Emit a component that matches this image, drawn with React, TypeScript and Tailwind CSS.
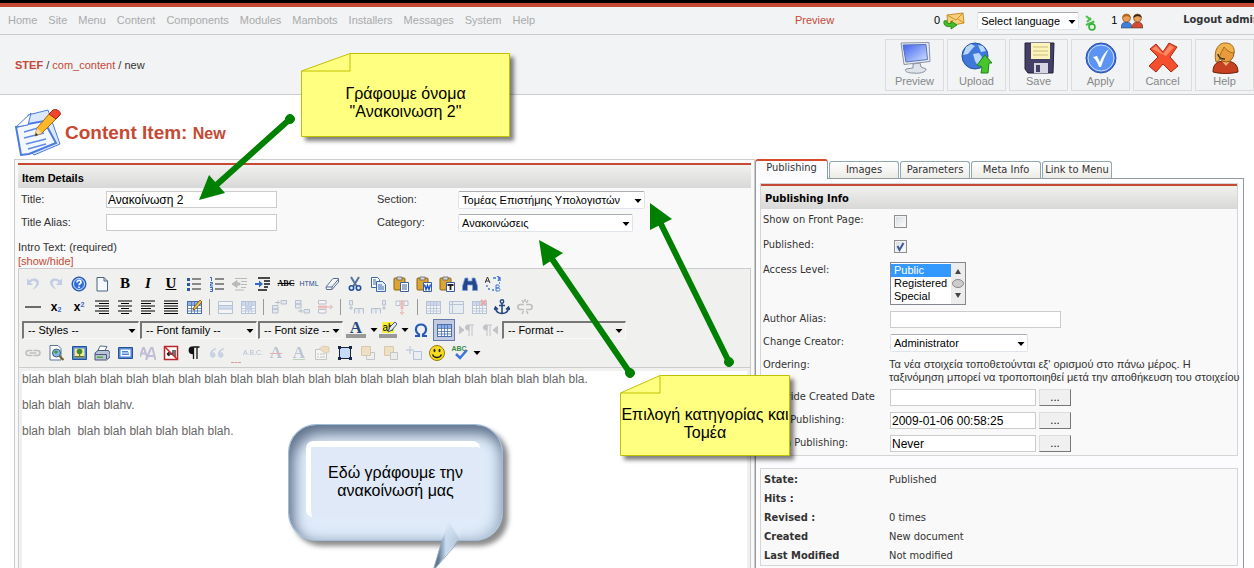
import { useState } from "react";
import type { ReactNode } from "react";

const menuItems = ["Home", "Site", "Menu", "Content", "Components", "Modules", "Mambots", "Installers", "Messages", "System", "Help"];
const tabs = ["Publishing", "Images", "Parameters", "Meta Info", "Link to Menu"];

const blah = `${"blah ".repeat(21)}bla.

blah blah  blah blahv.

blah blah  blah blah blah blah blah blah.`;

const info = [
  ["State:", "Published"],
  ["Hits :", ""],
  ["Revised :", "0 times"],
  ["Created", "New document"],
  ["Last Modified", "Not modified"],
];

/* ---------- 16px editor icons ---------- */

const grid = (
  <>
    <rect x="1.5" y="2.5" width="14" height="12" fill="#fff" stroke="#4a6fb0" />
    <path d="M2 3h13v3H2z" fill="#8fb0e6" />
    <path d="M1.500 6.500h14M1.500 9.500h14M1.500 12h14M5.500 3v11M8.500 3v11M11.500 3v11" stroke="#4a6fb0" strokeWidth=".8" />
  </>
);

const clipboard = (
  <>
    <rect x="1" y="2" width="11" height="12" rx="1" fill="#dba535" stroke="#8a6417" />
    <path d="M4 1h5v3H4z" fill="#d8d8d8" stroke="#666" strokeWidth=".8" />
    <path d="M7.500 6.500h8v9h-8z" fill="#fff" stroke="#3b5f9d" />
  </>
);

const art: Record<string, ReactNode> = {
  undo: <path d="M2 2v7h6L5.500 6.500C8 3 13 5 11 9c-.7 1.600-2 3-4 4.500 4-.8 7-4 7-7C14 2 7 1 4 4.500z" fill="#6f8fd0" />,
  redo: <path d="M14 2v7H8l2.500-2.500C8 3 3 5 5 9c.7 1.600 2 3 4 4.500-4-.8-7-4-7-7C2 2 9 1 12 4.500z" fill="#6f8fd0" />,
  help: (
    <>
      <circle cx="8" cy="8" r="7" fill="#2f6fd8" stroke="#1d4fa5" />
      <circle cx="8" cy="8" r="5.500" fill="none" stroke="#d6e6ff" />
      <path d="M6 6.500c0-3 4.500-2.800 4 0-.2 1-2 1.200-2 2.800M8 10.500v1.600" fill="none" stroke="#fff" strokeWidth="1.600" />
    </>
  ),
  page: <path d="M3 1.500h7l3.500 3.500v10H3zM10 1.500V5h3.500" fill="#f5f9ff" stroke="#4a6385" />,
  bullist: (
    <>
      <path d="M6 3h9M6 8h9M6 13h9" stroke="#222" strokeWidth="1.200" />
      <path d="M1 2h3v3H1zM1 7h3v3H1zM1 12h3v3H1z" fill="#2c56a8" />
    </>
  ),
  numlist: (
    <>
      <path d="M6 3h9M6 8h9M6 13h9" stroke="#222" strokeWidth="1.200" />
      <path d="M1 1.500h1.500V5M1 6.500h2.500v1.500H1.500V10h2.500M1 11.500h2.500v4H1M1.500 13.500h2" fill="none" stroke="#3569c4" />
    </>
  ),
  outdent: <path d="M3 2.500h12M9 5.500h6M9 8.500h6M9 11.500h5M3 14h9M0 8l5-3.500V7h3v2H5v2.500z" fill="#555" stroke="#555" />,
  indent: (
    <>
      <path d="M3 2h12M9 5h6M9 8h6M9 11h4M3 14h9" stroke="#111" strokeWidth="1.500" />
      <path d="M8 8 4 4.500V7H0v2h4v2.500z" fill="#3569c4" />
    </>
  ),
  eraser: <path d="M2 11 9 2.500h5.500v3.500L8 13.500H2.500zM2 11h6l6.500-8M8 11v2.500" fill="#fff" stroke="#5a6f94" />,
  cut: (
    <>
      <path d="m4 1 5.500 9M12 1 6.500 10" stroke="#52749e" strokeWidth="2" />
      <circle cx="4.500" cy="12" r="2.200" fill="none" stroke="#1f4e9c" strokeWidth="1.600" />
      <circle cx="11.500" cy="12" r="2.200" fill="none" stroke="#1f4e9c" strokeWidth="1.600" />
    </>
  ),
  copy: (
    <>
      <path d="M1.500 1.500h6l2 2v8h-8z" fill="#fff" stroke="#3e66a8" />
      <path d="M6.500 5.500h6l3 3v7h-9zM8 9h4M8 11h6M8 13h6M3 4h3M3 6h3M3 8h3" fill="#e6effc" stroke="#3e66a8" />
    </>
  ),
  paste: <>{clipboard}<path d="M9 9h5M9 11h5M9 13h5" stroke="#3b5f9d" /></>,
  pasteword: <>{clipboard}<path d="m8.500 8.500 1.500 5 1.500-4 1.500 4 1.500-5" fill="none" stroke="#1b57c4" strokeWidth="1.500" /></>,
  pastetext: <>{clipboard}<path d="M8.500 9h6M11.500 9v5" stroke="#222" strokeWidth="1.800" /></>,
  search: <path d="M3 2h3v3h4V2h3l2.500 8v4.500h-5V9H5.500v5.500h-5V10z" fill="#25478c" stroke="#7fa1dc" strokeWidth=".8" />,
  replace: (
    <>
      <path d="m0 7 2.500-6L5 7M1 5h3" fill="none" stroke="#333" />
      <path d="M11 9v6h2.500c2 0 2-2.700 0-3H11h2c1.800-.3 1.800-3 0-3z" fill="none" stroke="#3f74d6" />
      <path d="M8 2h3M13 2h2v3M14 7h1M2 9v2M3 13h2M7 14h2M12 0l3 2-2 3" fill="none" stroke="#3f74d6" strokeWidth="1.300" />
    </>
  ),
  hr: <path d="M0 8h16" stroke="#111" strokeWidth="1.200" />,
  right: <path d="M1 2h14M5 4.500h10M1 7h14M5 9.500h10M1 12h14M5 14.500h10" stroke="#000" strokeWidth="1.200" />,
  center: <path d="M1 2h14M4 4.500h8M1 7h14M4 9.500h8M1 12h14M4 14.500h8" stroke="#000" strokeWidth="1.200" />,
  left: <path d="M1 2h14M1 4.500h10M1 7h14M1 9.500h10M1 12h14M1 14.500h10" stroke="#000" strokeWidth="1.200" />,
  justify: <path d="M1 2h14M1 4.500h14M1 7h14M1 9.500h14M1 12h14M1 14.500h14" stroke="#000" strokeWidth="1.200" />,
  edittable: <>{grid}<path d="m7 11 1-3 6-7 2 2-6.500 7z" fill="#f0c34c" stroke="#6d4b16" strokeWidth=".8" /></>,
  table: grid,
  rowprops: <><path d="M1.500 2.500h14v12h-14z" fill="#fff" stroke="#4a6fb0" /><path d="M1.500 6.500h14v3.500h-14z" fill="#9dbbe8" stroke="#4a6fb0" /></>,
  cellprops: <>{grid}<path d="M5.500 6h6v5h-6z" fill="#6f98de" /></>,
  rowbefore: <path d="M10 1.500h5.500V5H10zM1.500 6.500H7V10H1.500zM1.500 10H7v4H1.500zM4 3.500h5M7 1.500v4" fill="#cdddf5" stroke="#50698f" />,
  rowafter: <path d="M1.500 1.500H7V5H1.500zM1.500 5H7v4H1.500zM10 10.500h5.500V14H10zM4 12h5M7 10v4" fill="#cdddf5" stroke="#50698f" />,
  delrow: <><path d="M1.500 1.500H9V5H1.500zM1.500 10.500H9V14H1.500z" fill="#fff" stroke="#50698f" /><path d="M1 6.500h9v3H1z" fill="#e06060" /><path d="M10 8h5m-2-2 2.500 2-2.500 2" stroke="#c44" fill="none" /></>,
  colbefore: <path d="M1.500 1.500h3V6h-3zM6.500 14.500V9.500H11v5M11 9.500h4.500v5M3 7v4M1 9h4" fill="#cdddf5" stroke="#50698f" />,
  colafter: <path d="M11.500 1.500h3V6h-3zM.5 14.500V9.500H5v5M5 9.500h4.500v5M13 7v4M11 9h4" fill="#cdddf5" stroke="#50698f" />,
  delcol: <><path d="M2 2h4v4.500H2zM10 2h4v4.500h-4z" fill="#fff" stroke="#50698f" /><path d="M6.500 1h3v9h-3z" fill="#e06060" /><path d="M8 10v5m-2-2 2 2.500 2-2.500" stroke="#c44" fill="none" /></>,
  merge: <><path d="M1.500 2.500h14v12h-14z" fill="#dce8fa" stroke="#4a6fb0" /><path d="M1.500 5.500h14M4.500 3v11" stroke="#4a6fb0" /></>,
  deltable: <>{grid}<path d="m10 1 5 5M15 1l-5 5" stroke="#d22" strokeWidth="2" /></>,
  anchor: (
    <>
      <circle cx="8" cy="2.500" r="1.700" fill="none" stroke="#27467f" strokeWidth="1.400" />
      <path d="M8 4v11M5 6.500h6M1.500 9c.5 4 3 5.500 6.500 5.500s6-1.500 6.500-5.500M0 11l1.500-3L4 10.500M16 11l-1.500-3L12 10.500" fill="none" stroke="#27467f" strokeWidth="1.600" />
    </>
  ),
  unlink: <path d="M7 5.500H3.500c-3.500 0-3.500 5 0 5H7M9 5.500h3.500c3.500 0 3.500 5 0 5H9M5 1l1.500 3M11 1 9.500 4M8 0v3M5 15l1.500-3M11 15l-1.500-3" fill="none" stroke="#666" strokeWidth="1.600" />,
  link: <path d="M7.500 5.500H4c-4 0-4 5 0 5h3.500M8.500 5.500H12c4 0 4 5 0 5H8.500M4.500 8h7" fill="none" stroke="#666" strokeWidth="1.600" />,
  omega: <path d="M2 14h4v-1.500C1 9 2.500 2.500 8 2.500S15 9 10 12.500V14h4" fill="none" stroke="#2659bd" strokeWidth="2.200" />,
  ltr: <path d="M0 4v8l5-4zM10 14V3M13 14V3M15 3H9C5.500 3 5.500 8 9 8h1V3" fill="#6b6f80" stroke="#6b6f80" />,
  rtl: <path d="M16 4v8l-5-4zM5 14V3M8 14V3M10 3H4C.5 3 .5 8 4 8h1V3" fill="#6b6f80" stroke="#6b6f80" />,
  preview: (
    <>
      <path d="M2 .5h8l3 3V15H2z" fill="#fff" stroke="#5b7597" />
      <circle cx="8.500" cy="8" r="4" fill="#88b8dd" stroke="#3b607f" />
      <path d="M6 7c1-2 3-2 4 0l-2 2z" fill="#3f9a4a" />
      <path d="m11.500 11 4 4" stroke="#7a6030" strokeWidth="2.200" />
    </>
  ),
  image: <><path d="M1.500 1.500h14v13h-14z" fill="#4f86d8" stroke="#24519a" /><path d="M3.500 3.500h10v9h-10z" fill="#f4e89a" /><circle cx="8.500" cy="6.500" r="2.800" fill="#3d8b34" /><path d="M3.500 11h10v1.500h-10zM8 8h1.200v3.500H8z" fill="#5b7a2c" /></>,
  print: <><path d="m6 1 7 .5-2.500 5H3.500z" fill="#fff" stroke="#5b6d8a" /><path d="M1 8l3-2.500h10.500L16 8v4l-3.500 3H1z" fill="#b8c4d6" stroke="#48597a" /><path d="M1 9.500h11.500V14" fill="none" stroke="#48597a" /><path d="M3 11.500h6v1.500H3z" fill="#4caf3c" /></>,
  fullscreen: <><path d="M1.500 2.500h14v11h-14z" fill="#4f86d8" stroke="#24519a" /><path d="M3.500 4.500h10v7h-10z" fill="#fff" /><path d="M5 6.500h6M5 8h7M5 9.500h7" stroke="#4f86d8" /></>,
  styleprops: <path d="m0 12 3-9h1l3 9M1.500 8.500h4M6 15l5-12h1.500l3 12M8 11h6.500" fill="none" stroke="#6c5fae" strokeWidth="2" />,
  cleanup: <><path d="M1.500 1.500h13v13h-13z" fill="#fff" stroke="#b3282c" strokeWidth="1.500" /><path d="M4 9h6V5M4 9l2.500-2M4 9l2.500 2M12 5v7" fill="none" stroke="#222" strokeWidth="1.300" /><path d="m2 2 12 12" stroke="#d22" strokeWidth="1.500" /></>,
  pilcrow: <path d="M7.500 14V2M11 14V2M13.500 2H7C2 2 2 8.500 7 8.500h.5V2z" fill="#111" stroke="#111" strokeWidth="1.300" />,
  quote: <path d="M7 3C2 4.500 1 7 1 10c0 3.500 5.500 3.500 5.500 0 0-2-1.500-3-3-2.500.3-1.500 1.500-2.500 3.500-3zM15 3c-5 1.500-6 4-6 7 0 3.500 5.500 3.500 5.500 0 0-2-1.500-3-3-2.500.3-1.500 1.500-2.500 3.500-3z" fill="#7f9bd0" />,
  attribs: <><path d="M1.500 4.500h11v10h-11z" fill="#fff" stroke="#777" /><path d="M3 9h2M6 9h5M3 12h2M6 12h5" stroke="#777" /><path d="m5 4 4-3 6 1v5l-4 1z" fill="#e8b96c" stroke="#a9793d" strokeWidth=".8" /></>,
  layer: <><path d="M2.500 2.500h11v11h-11z" fill="#c6dcfa" stroke="#223" /><path d="M1 1h3v3H1zM12 1h3v3h-3zM1 12h3v3H1zM12 12h3v3h-3z" fill="#152a4d" /></>,
  forward: <><path d="M6.500 7.500h8v7h-8z" fill="#e8eefa" stroke="#777" /><path d="M1.500 1.500h9v9h-9z" fill="#ecc56d" stroke="#a98035" /></>,
  backward: <><path d="M1.500 1.500h9v9h-9z" fill="#ecc56d" stroke="#a98035" /><path d="M7.500 7.500h7v7h-7z" fill="#dfe6f2" stroke="#777" /></>,
  abslayer: <path d="M7.500 6.500h8v8h-8zM4 1v8M0 5h8" fill="#e3ebf9" stroke="#4a6fb0" />,
  smiley: <><circle cx="8" cy="8" r="7.500" fill="#f6dc1c" stroke="#9a7a08" /><ellipse cx="5.500" cy="5.500" rx="1" ry="1.800" fill="#222" /><ellipse cx="10.500" cy="5.500" rx="1" ry="1.800" fill="#222" /><path d="M3.500 9.500c1.500 4 7.500 4 9 0" fill="none" stroke="#222" strokeWidth="1.300" /></>,
};

const rowOne = ["undo", "redo", "help", "page", "B", "I", "U", "bullist", "numlist", "outdent", "indent", "ABC", "HTML", "eraser", "cut", "copy", "paste", "pasteword", "pastetext", "search", "replace"];
const rowTwo = ["hr", "sub", "sup", "right", "center", "left", "justify", "edittable", "|", "rowprops", "cellprops", "|", "rowbefore", "rowafter", "delrow", "|", "colbefore", "colafter", "delcol", "|", "table:off", "merge", "deltable", "anchor", "unlink"];
const rowFour = ["link", "preview", "image", "print", "fullscreen", "styleprops", "cleanup", "pilcrow", "quote", "acronym", "A.B.C.", "del", "ins", "attribs", "layer", "forward", "backward", "abslayer", "smiley", "spell"];
const disabled = ["undo", "redo", "outdent", "rowprops", "cellprops", "rowbefore", "rowafter", "delrow", "colbefore", "colafter", "delcol", "table:off", "merge", "deltable", "unlink", "link", "styleprops", "quote", "acronym", "A.B.C.", "del", "ins", "attribs", "forward", "backward", "abslayer", "ltr", "rtl"];

const glyphs: Record<string, ReactNode> = {
  B: <b className="font-['Liberation_Serif',serif] text-[15px]">B</b>,
  I: <b className="font-['Liberation_Serif',serif] text-[15px] italic">I</b>,
  U: <b className="font-['Liberation_Serif',serif] text-[15px] underline">U</b>,
  ABC: <span className="font-['Liberation_Serif',serif] text-[8px] font-bold line-through">ABC</span>,
  HTML: <span className="text-[7px] text-[#1f4a94]">HTML</span>,
  sub: <b className="text-[12px]">x<sub className="text-[7px] text-[#3569c4]">2</sub></b>,
  sup: <b className="text-[12px]">x<sup className="text-[7px] text-[#3569c4]">2</sup></b>,
  "A.B.C.": <span className="text-[7px] text-[#3c5fa0]">A.B.C.</span>,
  del: <b className="font-['Liberation_Serif',serif] text-[17px] text-[#5c76a8] line-through decoration-[#e03030] decoration-1">A</b>,
  ins: <b className="font-['Liberation_Serif',serif] text-[17px] text-[#5c76a8] underline decoration-[#5aa050] decoration-1">A</b>,
};

const Tool = ({ name }: { name: string }) => {
  if (name === "|") return <span className="mr-1 ml-[3px] h-4 w-px bg-[#999]" />;
  if (name === "acronym")
    return (
      <button aria-label="Acronym" className="flex h-5 w-[13px] items-end justify-center">
        <span className="w-[10px] border-b border-dashed border-[#dca0a0]" />
      </button>
    );
  if (name === "spell")
    return (
      <button aria-label="Spellcheck" className="flex h-5 w-8 items-center gap-1">
        <span className="relative h-4 w-[22px] text-center text-[7px] leading-[7px] font-bold text-[#3c8a4a]">
          ABC
          <svg viewBox="0 0 16 10" className="absolute top-[5px] left-1 h-[10px] w-4"><path d="m3 4 4 4 7-8" fill="none" stroke="#3f74d6" strokeWidth="2.500" /></svg>
        </span>
        <Arrow />
      </button>
    );
  const key = name.split(":")[0];
  return (
    <button aria-label={key} className={`mr-px flex h-5 w-[22px] shrink-0 items-center justify-center leading-none text-black ${disabled.includes(name) ? "opacity-35" : ""}`}>
      {glyphs[key] ?? <svg viewBox="0 0 16 16" className="size-4">{art[key]}</svg>}
    </button>
  );
};

const Arrow = () => (
  <svg viewBox="0 0 8 4" className="h-1 w-2 shrink-0"><path d="M.5 0h7L4 4z" fill="#000" /></svg>
);

const Drop = ({ id, label, value, className }: { id: string; label?: string; value: string; className: string }) => (
  <span className="relative inline-flex w-fit">
    <select id={id} aria-label={label} className={`h-[18px] appearance-none rounded-[2px] border border-[#dfe3ea] border-t-[#abadb3] bg-white pr-3 pl-[3px] font-['Liberation_Sans',Arial,sans-serif] text-[11px] text-black outline-none ${className}`}>
      <option>{value}</option>
    </select>
    <span className="pointer-events-none absolute top-0 right-[3px] flex h-[20px] items-center"><Arrow /></span>
  </span>
);

const ToolSelect = ({ label, className }: { label: string; className: string }) => (
  <span className="relative mr-px inline-flex">
    <select aria-label={label} className={`h-[18px] appearance-none border border-t-2 border-l-2 border-[#fafafa] border-t-[#777] border-l-[#777] bg-[#f0f0ee] pl-1 text-[11px] leading-[14px] text-black outline-none ${className}`}>
      <option>-- {label} --</option>
    </select>
    <span className="pointer-events-none absolute top-0 right-[3px] flex h-[20px] items-center"><Arrow /></span>
  </span>
);

const inputClass = "h-[17px] border border-[#ccc] bg-white px-px text-[12px] text-black outline-none";

const Heading = ({ children }: { children: ReactNode }) => (
  <h2 className="h-[25px] border-t-2 border-[#c64934] bg-linear-to-b from-[#f1f1ee] to-[#d8d8d8] pl-1 text-[11px] leading-[26px] font-bold text-black">{children}</h2>
);

/* ---------- header icons ---------- */

const HeaderButton = ({ label, children }: { label: string; children: ReactNode }) => (
  <button className="flex h-[52px] w-[59px] shrink-0 flex-col items-center border border-[#dcdcdc] pt-[2px] text-[11px] leading-[14px] text-[#888]">
    <svg viewBox="0 0 32 32" className="size-8">{children}</svg>
    {label}
  </button>
);

const Person = ({ x, shirt, hair }: { x: number; shirt: string; hair: string }) => (
  <g transform={`translate(${x} 0)`}>
    <path d="M0 15c0-4 2-6 5.500-6s5.500 2 5.500 6z" fill={shirt} stroke="#333" strokeWidth=".5" />
    <circle cx="5.500" cy="5" r="4" fill="#e9a05a" stroke="#6b3a14" strokeWidth=".6" />
    <path d="M1.500 5C1 0 10 0 9.500 5 8 2.800 4 2.500 1.500 5z" fill={hair} />
  </g>
);

// Sticky note with its top left corner folded over
const Note = ({ w, h, fold, className, children }: { w: number; h: number; fold: number; className: string; children: ReactNode }) => (
  <div className={`absolute flex items-center justify-center pt-4 text-center text-[16px] leading-[18px] whitespace-nowrap text-black ${className}`}>
    <svg width={w} height={h} className="absolute top-0 left-0 overflow-visible drop-shadow-[4px_4px_2px_rgba(0,0,0,0.5)]">
      <path d={`M.5 18 ${fold} .5H${w - 0.5}V${h - 0.5}H.5z`} fill="#ffff80" stroke="#c0c000" />
      <path d={`M.5 18H${fold}V.5`} fill="none" stroke="#c0c000" />
    </svg>
    <p className="relative">{children}</p>
  </div>
);

const Annotations = () => (
  <div className="pointer-events-none absolute inset-0">
    <svg className="absolute top-0 left-0 h-full w-full" fill="#008000" stroke="#008000">
      <path d="M290 119 213 188M630 373 550 256M729 362 658 218" strokeWidth="6" />
      <path d="m199 200 10-25 16 18zM539 240l24 13-20 13zM650 203l22 16-22 11z" stroke="none" />
      <circle cx="290" cy="119" r="4.500" />
      <circle cx="630" cy="373" r="4.500" />
      <circle cx="729" cy="362" r="4.500" />
    </svg>
    <Note w={209} h={84} fold={49} className="top-[53px] left-[301px] h-[84px] w-[209px]">
      Γράφουμε όνομα<br />"Ανακοινωση 2"
    </Note>
    <Note w={170} h={81} fold={40} className="top-[375px] left-[620px] h-[81px] w-[170px]">
      Επιλογή κατηγορίας και<br />Τομέα
    </Note>
    <div className="absolute top-[424px] left-[288px] h-[117px] w-[215px] rounded-[28px] border border-[#9fbcd8] bg-[#dfebf9] shadow-[5px_5px_5px_rgba(0,0,0,0.45),inset_5px_9px_14px_#60738c,inset_-6px_-2px_12px_#b4c6da]">
      <div className="absolute top-4 left-[17px] flex h-[76px] w-[174px] items-center justify-center rounded-[7px] border-t-[6px] border-l-[5px] border-white bg-[#dfe9f7] text-center text-[16px] leading-[18px] text-black">
        <p>Εδώ γράφουμε την<br />ανακοίνωσή μας</p>
      </div>
      <svg viewBox="0 0 50 60" className="absolute top-[94px] left-[140px] h-[60px] w-[50px]">
        <defs>
          <linearGradient id="tail" x1="0" x2="1">
            <stop offset=".2" stopColor="#5f7691" />
            <stop offset=".5" stopColor="#c9dbee" />
            <stop offset="1" stopColor="#b4c6da" />
          </linearGradient>
          <linearGradient id="tailTop" x1="0" y1="0" x2="0" y2="1">
            <stop stopColor="#dfebf9" />
            <stop offset="1" stopColor="#dfebf9" stopOpacity="0" />
          </linearGradient>
        </defs>
        <path d="m20 2-7 19L4 52 30 20 20 2z" fill="url(#tail)" />
        <path d="M12 0h20v21H12z" fill="url(#tailTop)" />
        <path d="M13 22 4 52 30 22" fill="none" stroke="#8ea9c6" />
      </svg>
    </div>
  </div>
);

const Field = ({ label, id, className, children }: { label: string; id: string; className: string; children: ReactNode }) => (
  <div className={`flex items-start pl-[2px] ${className}`}>
    <label htmlFor={id} className="w-[127px] shrink-0 pt-1 leading-[14px] whitespace-nowrap">{label}</label>
    {children}
  </div>
);

const Check = ({ id, checked, onChange }: { id: string; checked: boolean; onChange: (v: boolean) => void }) => (
  <span className="relative mt-[6px] ml-1 size-[13px]">
    <input id={id} type="checkbox" checked={checked} onChange={(e) => onChange(e.target.checked)} className="block size-[13px] appearance-none border border-[#8e8f8f] bg-linear-to-br from-[#d5dae0] to-white inset-ring inset-ring-[#f4f4f4]" />
    {checked && (
      <svg viewBox="0 0 13 13" className="pointer-events-none absolute inset-0 size-[13px]"><path d="m3.500 6 2 4 4-7" fill="none" stroke="#3f5798" strokeWidth="2" /></svg>
    )}
  </span>
);

export default function App() {
  const [tab, setTab] = useState("Publishing");
  const [frontPage, setFrontPage] = useState(false);
  const [published, setPublished] = useState(true);

  return (
    <div className="relative flex h-screen flex-col overflow-hidden bg-white font-['Liberation_Sans',Arial,sans-serif] text-[11px] text-[#333]">
      <div className="h-[7px] shrink-0 border-t-[3px] border-black bg-[#c64934]" />

      <header className="shrink-0 bg-[#f1f3f5]">
        <div className="flex h-7 items-center border-b border-[#ccc]">
          <nav className="flex grow gap-[11px] pl-2">
            {menuItems.map((m) => (
              <a key={m} href="#" className="text-[#aaa]">{m}</a>
            ))}
          </nav>
          <div className="flex w-[459px] shrink-0 items-center whitespace-nowrap">
            <a href="#" className="w-[139px] shrink-0 text-[#c64934]">Preview</a>
            <span className="pr-[3px] text-black">0</span>
            <svg viewBox="0 0 22 18" className="mr-3 h-[18px] w-[22px] shrink-0">
              <path d="m4 3 16-2 1 10-16 3z" fill="#f7cf79" stroke="#c98f2c" />
              <path d="m4 3 9 5 7-7M5 14l5-6M21 11l-6-4" fill="none" stroke="#c98f2c" />
              <path d="M1 9c-1 5 3 6 7 5.500V17l6-4-6-4v2.500c-3 .5-4-.5-4.500-3z" fill="#3fbf2a" stroke="#1f7d14" strokeWidth=".8" />
            </svg>
            <Drop id="language" label="Language" value="Select language" className="w-[102px]" />
            <svg viewBox="0 0 12 18" className="mt-1 ml-[6px] h-[18px] w-3 shrink-0">
              <path d="m1 2 5 4M2 8l4-4M1 11l7-3M9 7 4 13" stroke="#4cc24a" strokeWidth="2" />
              <circle cx="7" cy="13" r="3" fill="#d9f5d6" stroke="#2faf35" strokeWidth="1.500" />
            </svg>
            <span className="ml-[14px] pr-1 text-black">1</span>
            <svg viewBox="0 0 22 16" className="h-4 w-[22px] shrink-0">
              <Person x={0} shirt="#3f7fdd" hair="#b8651b" />
              <Person x={11} shirt="#d9482c" hair="#3c2415" />
            </svg>
            <a href="#" className="ml-10 font-['DejaVu_Sans_Condensed',sans-serif] font-bold">Logout admin</a>
          </div>
        </div>

        <div className="flex h-[60px] items-center justify-between border-b border-[#ccc]">
          <p className="pt-px pl-[15px]">
            <a href="#" className="font-bold text-[#c64934]">STEF</a> / <a href="#" className="text-[#c64934]">com_content</a> / new
          </p>
          <div className="flex gap-[3px]">
            <HeaderButton label="Preview">
              <defs>
                <linearGradient id="screen" x1="0" y1="0" x2="1" y2="1"><stop stopColor="#3f62ee" /><stop offset="1" stopColor="#d3e3ff" /></linearGradient>
              </defs>
              <path d="m2 1 28-.5 1 19-26 3z" fill="#e9edf3" stroke="#8992a3" />
              <path d="m4 3 23-.5 1.500 15L7 20z" fill="url(#screen)" stroke="#5673bd" />
              <path d="m14 22 7-1 1 4 5 2c1 3-7 5-13 4-6 0-9-2-7-4l7-1z" fill="#dfe3ea" stroke="#8992a3" />
            </HeaderButton>
            <HeaderButton label="Upload">
              <circle cx="14" cy="14" r="13" fill="#3f78da" stroke="#2352a4" />
              <path d="m5 5 5-3 4 2-3 3-4 5-5 1zM12 12l6-1 3 4-4 9-3-5zM17 3l5 1 3 5-5 1z" fill="#b7d7fb" />
              <path d="m24 13 7 8h-3l-1 10h-7l1-6-5-2z" fill="#46c62e" stroke="#24831a" />
            </HeaderButton>
            <HeaderButton label="Save">
              <path d="M2 1h29l-1 30H5l-3-4z" fill="#443f66" stroke="#221e38" />
              <path d="M8 1h19v16H8z" fill="#fbf4bb" />
              <path d="M10 5h15M10 9h15M10 13h15" stroke="#c9bd7e" />
              <path d="M11 21h14v10H11z" fill="#d5d6e2" /><path d="M13 23h4v7h-4z" fill="#443f66" />
            </HeaderButton>
            <HeaderButton label="Apply">
              <circle cx="16" cy="16" r="15" fill="#3c70e0" stroke="#2a50ac" />
              <circle cx="16" cy="16" r="13" fill="#5b94f2" stroke="#cfe0ff" />
              <path d="m8 15 4-1 3 6c2-6 5-10 9-13-3 5-6 11-8 18h-2c-1-4-3-7-6-10z" fill="#fff" />
            </HeaderButton>
            <HeaderButton label="Cancel">
              <path d="m3 7 6-5 7 8 6-9 8 4-7 10 8 9-7 6-8-8-7 8-7-6 9-9z" fill="#f4502d" stroke="#a92a13" />
              <path d="m5 7 4-3 7 8 7-9 4 2-8 9z" fill="#ff8a64" />
            </HeaderButton>
            <HeaderButton label="Help">
              <path d="M4 30c0-8 4-11 12-11s13 3 13 11c-8 2-17 2-25 0z" fill="#c7401f" stroke="#6f210c" />
              <path d="m12 18 5 6 5-6z" fill="#f1b273" />
              <ellipse cx="17" cy="11" rx="8" ry="9" fill="#e99a3c" stroke="#8f5714" />
              <path d="M7 20C4 8 10 0 17 1c6 0 9 5 8 10-5 0-8-4-10-6-2 5-4 5-5 14z" fill="#f1b14c" stroke="#a36a1c" />
              <path d="M9 12c0 3 3 5 7 5" fill="none" stroke="#333" strokeWidth="1.500" />
            </HeaderButton>
          </div>
        </div>
      </header>

      <div className="flex h-16 shrink-0 items-center pl-[15px]">
        <svg viewBox="0 0 48 48" className="mt-3 size-12">
          <path d="m13 6 20-5 12 34-26 11-6-6z" fill="#dbe9ff" stroke="#4b7be0" />
          <path d="m1 18 12-3L29 12l12 22-27 11L6 46z" fill="#f3f8ff" stroke="#4b7be0" strokeWidth="2" />
          <path d="m1 18 15-14-3 12z" fill="#fff" stroke="#4b7be0" />
          <path d="m9 23 14-4M9 29l20-5M11 35l20-5M13 40l18-5" stroke="#5f8ae8" strokeWidth="1.500" />
          <path d="m20 27 2-8L35 4l6 6-14 14z" fill="#fcb72a" stroke="#a56a0e" />
          <path d="m22 19 5 5-7 3z" fill="#f4d9a6" /><path d="m20 27 1-3 2 2z" fill="#222" />
          <path d="m34 5 4-4c3-2 9 2 7 5l-4 4z" fill="#f0472c" stroke="#a82312" />
        </svg>
        <h1 className="pt-3 pl-[2px] text-[19px] font-bold text-[#c64934]">Content Item: <small className="text-[16px]">New</small></h1>
      </div>

      <main className="grid min-h-0 grow grid-cols-[741fr_489fr] pr-[10px] pl-[14px]">
        <section className="flex min-w-0 flex-col border border-b-0 border-[#ccc] bg-[#f9f9f9] p-[3px] pb-0">
          <Heading>Item Details</Heading>
          <div className="grid auto-rows-[23px] grid-cols-[85px_271px_81px_1fr] items-center pl-[3px]">
            <label htmlFor="title">Title:</label>
            <input id="title" defaultValue="Ανακοίνωση 2" className={`w-[171px] ${inputClass}`} />
            <label htmlFor="section">Section:</label>
            <Drop id="section" value="Τομέας Επιστήμης Υπολογιστών" className="w-[187px]" />
            <label htmlFor="alias">Title Alias:</label>
            <input id="alias" className={`w-[171px] ${inputClass}`} />
            <label htmlFor="category">Category:</label>
            <Drop id="category" value="Ανακοινώσεις" className="w-[175px]" />
          </div>
          <label htmlFor="intro" className="pt-[6px] leading-[14px]">Intro Text: (required)</label>
          <a href="#" className="leading-[14px] text-[#c64934]">[show/hide]</a>

          <div className="flex min-h-0 grow flex-col border border-b-0 border-[#ccc] bg-[#f0f0ee]">
            <div className="border-b border-[#ccc] pt-[3px] pb-[3px] pl-[3px]">
              <div className="flex h-[23px] items-center">{rowOne.map((n) => <Tool key={n} name={n} />)}</div>
              <div className="flex h-[23px] items-center">{rowTwo.map((n, i) => <Tool key={i} name={n} />)}</div>
              <div className="flex h-[23px] items-center">
                <ToolSelect label="Styles" className="w-[117px]" />
                <ToolSelect label="Font family" className="w-[117px]" />
                <ToolSelect label="Font size" className="w-[85px]" />
                <button aria-label="Text color" className="ml-[2px] flex h-5 w-8 items-center gap-1">
                  <span className="w-5 border-b-4 border-[#999] text-center font-['Liberation_Serif',serif] text-[17px] leading-[13px] font-bold text-[#27467f]">A</span>
                  <Arrow />
                </button>
                <button aria-label="Highlight color" className="flex h-5 w-8 items-center gap-1">
                  <span className="relative ml-px w-[18px] border-b-4 border-[#999] text-[10px] leading-[13px] text-black">
                    <span className="bg-[#f5ee3c]">ab</span>
                    <svg viewBox="0 0 10 12" className="absolute top-0 right-0 h-3 w-[10px]"><path d="M1 11 3 6l5-5 2 2-5 6z" fill="#e4ecf8" stroke="#3e5a8a" /></svg>
                  </span>
                  <Arrow />
                </button>
                <Tool name="omega" />
                <button aria-label="Toggle guidelines" className="mr-px flex size-[22px] items-center justify-center border border-[#6779aa] bg-[#c2cbe0]">
                  <svg viewBox="0 0 16 16" className="size-4">{grid}</svg>
                </button>
                <Tool name="ltr" />
                <Tool name="rtl" />
                <ToolSelect label="Format" className="w-[124px]" />
              </div>
              <div className="flex h-[23px] items-center">{rowFour.map((n) => <Tool key={n} name={n} />)}</div>
            </div>
            <textarea
              id="intro"
              defaultValue={blah}
              className="m-[3px] mb-0 min-h-0 grow resize-none overflow-hidden bg-white pt-[2px] text-[12px] leading-[13px] text-[#666] outline-none"
            />
          </div>
        </section>

        <section className="flex min-w-0 flex-col font-['DejaVu_Sans_Condensed','Noto_Sans',sans-serif]">
          <div role="tablist" className="relative z-10 -mb-px flex items-end gap-px">
            {tabs.map((t) => (
              <button
                key={t}
                role="tab"
                aria-selected={tab === t}
                onClick={() => setTab(t)}
                className={
                  tab === t
                    ? "h-[20px] w-[73px] rounded-t-[3px] border-x border-t-2 border-[#919b9c] border-t-[#d6492c] bg-[#fcfcfe] pb-1 leading-[14px]"
                    : "h-[18px] w-[70px] rounded-t-[3px] border border-[#91a7b4] border-b-[#919b9c] bg-linear-to-b from-white to-[#ecebe6] leading-[16px] whitespace-nowrap"
                }
              >
                {t}
              </button>
            ))}
          </div>
          <div className="grow border border-b-0 border-[#919b9c] bg-[#fcfcfe] px-1 pt-1">
            <div className="mr-px border border-[#d5d5d5] bg-[#f9f9f9]">
              <Heading>Publishing Info</Heading>
              <Field label="Show on Front Page:" id="front" className="h-[25px]">
                <Check id="front" checked={frontPage} onChange={setFrontPage} />
              </Field>
              <Field label="Published:" id="published" className="h-[25px]">
                <Check id="published" checked={published} onChange={setPublished} />
              </Field>
              <Field label="Access Level:" id="access" className="h-[49px]">
                <div className="mt-[3px] flex h-[43px] w-[76px] border border-[#828790] bg-white">
                  <select id="access" size={3} defaultValue="Public" className="w-[60px] overflow-hidden pt-px font-['Liberation_Sans',Arial,sans-serif] text-[11px] text-black outline-none">
                    {["Public", "Registered", "Special"].map((o) => (
                      <option key={o} className="h-[13px] min-h-0 p-0 pl-[3px] leading-[13px] checked:bg-linear-to-r checked:from-[#3399ff] checked:to-[#3399ff] checked:[-webkit-text-fill-color:white]">{o}</option>
                    ))}
                  </select>
                  <svg viewBox="0 0 14 41" className="h-[41px] w-[14px]">
                    <path d="M0 0h14v41H0z" fill="#ececec" />
                    <path d="M4 11h6L7 6zM4 30h6l-3 5z" fill="#444" />
                    <ellipse cx="7" cy="20.500" rx="5.500" ry="4" fill="#ccc" stroke="#888" />
                  </svg>
                </div>
              </Field>
              <Field label="Author Alias:" id="author" className="h-[23px]">
                <input id="author" className={`mt-[3px] w-[171px] ${inputClass}`} />
              </Field>
              <Field label="Change Creator:" id="creator" className="h-[23px]">
                <span className="mt-[3px]"><Drop id="creator" value="Administrator" className="w-[138px]" /></span>
              </Field>
              <div className="flex h-8 pl-[2px]">
                <span className="w-[126px] shrink-0 pt-1 leading-[14px]">Ordering:</span>
                <p className="pt-1 font-['Liberation_Sans',Arial,sans-serif] leading-[13px] whitespace-nowrap">Τα νέα στοιχεία τοποθετούνται εξ' ορισμού στο πάνω μέρος. Η<br />ταξινόμηση μπορεί να τροποποιηθεί μετά την αποθήκευση του στοιχείου</p>
              </div>
              {[
                ["Override Created Date", ""],
                ["Start Publishing:", "2009-01-06 00:58:25"],
                ["Finish Publishing:", "Never"],
              ].map(([label, value]) => (
                <Field key={label} label={label} id={label} className="h-[23px]">
                  <input id={label} defaultValue={value} className={`mt-[3px] w-[146px] font-['Liberation_Sans',Arial,sans-serif] ${inputClass}`} />
                  <button aria-label={`Pick ${label}`} className="mt-[3px] ml-[3px] h-[17px] w-8 border border-[#ddd] border-r-[#777] border-b-[#777] bg-[#f0f0f0] leading-[14px] text-black">...</button>
                </Field>
              ))}
            </div>

            <div className="mt-3 mr-px border border-[#d5d5d5] bg-[#f9f9f9] pt-px">
              <table className="w-full text-left">
                <tbody>
                  {info.map(([k, v]) => (
                    <tr key={k} className="h-[19px] leading-[14px]">
                      <th className="w-[128px] pl-[3px] font-bold">{k}</th>
                      <td>{v}</td>
                    </tr>
                  ))}
                </tbody>
              </table>
            </div>
          </div>
        </section>
      </main>

      <Annotations />
    </div>
  );
}
